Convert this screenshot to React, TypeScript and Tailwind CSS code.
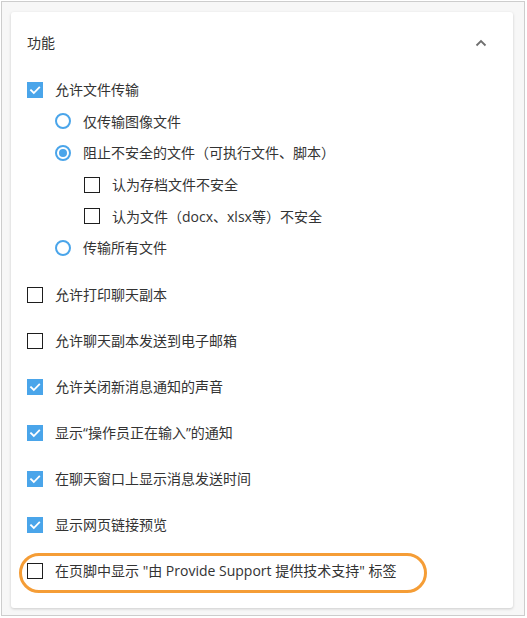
import React from "react";

const BLUE = "#4aa5ea";

function CheckBox({ checked }: { checked: boolean }) {
  if (checked) {
    return (
      <span className="w-[16px] h-[16px] shrink-0 bg-[#4aa5ea] flex items-center justify-center">
        <svg width="12" height="12" viewBox="0 0 12 12" fill="none">
          <path d="M2 6.2 L4.8 9 L10.2 3.4" stroke="white" strokeWidth="1.8" strokeLinecap="square" />
        </svg>
      </span>
    );
  }
  return <span className="w-[16px] h-[16px] shrink-0 border-[1.5px] border-[#1e1e1e] bg-white" />;
}

function Radio({ checked }: { checked: boolean }) {
  return (
    <span className="w-[16px] h-[16px] shrink-0 rounded-full border-2 border-[#4aa5ea] flex items-center justify-center">
      {checked && <span className="w-[8px] h-[8px] rounded-full bg-[#4aa5ea]" />}
    </span>
  );
}

function SubRow({ children, indent }: { children: React.ReactNode; indent: string }) {
  return <div className={`h-[31.6px] flex items-center gap-3 ${indent}`}>{children}</div>;
}

const top = [
  { label: "允许打印聊天副本", checked: false },
  { label: "允许聊天副本发送到电子邮箱", checked: false },
  { label: "允许关闭新消息通知的声音", checked: true },
  { label: "显示“操作员正在输入”的通知", checked: true },
  { label: "在聊天窗口上显示消息发送时间", checked: true },
  { label: "显示网页链接预览", checked: true },
];

export default function App() {
  void BLUE;
  return (
    <div
      className="w-[527px] h-[618px] bg-white"
      style={{}}
    >
      <div
        className="ml-[1px] mt-[1px] w-[524px] h-[615px] border border-[#cdcdcd] bg-[#f7f7f7] pl-[9px] pt-[10px] text-[14px] text-[#333333]"
        style={{ fontFamily: '"Open Sans", "Noto Sans CJK SC", sans-serif' }}
      >
        <div className="w-[502px] h-[596px] bg-white rounded-[3px] shadow-[0_1px_3px_rgba(0,0,0,0.18)] flex flex-col">
          <div className="h-[62px] flex items-center justify-between pl-4 pr-[26px]">
            <span className="leading-none">功能</span>
            <svg width="12" height="8" viewBox="0 0 12 8" fill="none">
              <path d="M1.5 6.5 L6 2 L10.5 6.5" stroke="#6f6f6f" strokeWidth="1.8" />
            </svg>
          </div>
          <div className="pl-4 flex flex-col">
            <SubRow indent="">
              <CheckBox checked={true} />
              <span>允许文件传输</span>
            </SubRow>
            <SubRow indent="pl-[28px]">
              <Radio checked={false} />
              <span>仅传输图像文件</span>
            </SubRow>
            <SubRow indent="pl-[28px]">
              <Radio checked={true} />
              <span>阻止不安全的文件（可执行文件、脚本）</span>
            </SubRow>
            <SubRow indent="pl-[57px]">
              <CheckBox checked={false} />
              <span>认为存档文件不安全</span>
            </SubRow>
            <SubRow indent="pl-[57px]">
              <CheckBox checked={false} />
              <span>认为文件（docx、xlsx等）不安全</span>
            </SubRow>
            <SubRow indent="pl-[28px]">
              <Radio checked={false} />
              <span>传输所有文件</span>
            </SubRow>
            <div className="mt-[8.4px] flex flex-col">
              {top.map((t) => (
                <div key={t.label} className="h-[46px] flex items-center gap-3">
                  <CheckBox checked={t.checked} />
                  <span>{t.label}</span>
                </div>
              ))}
              <div className="relative h-[46px] flex items-center gap-3">
                <div className="absolute left-[-8px] top-[5px] w-[408px] h-[40px] rounded-full border-[3.5px] border-[#f59d36] pointer-events-none" />
                <CheckBox checked={false} />
                <span>在页脚中显示 "由 Provide Support 提供技术支持" 标签</span>
              </div>
            </div>
          </div>
        </div>
      </div>
    </div>
  );
}
